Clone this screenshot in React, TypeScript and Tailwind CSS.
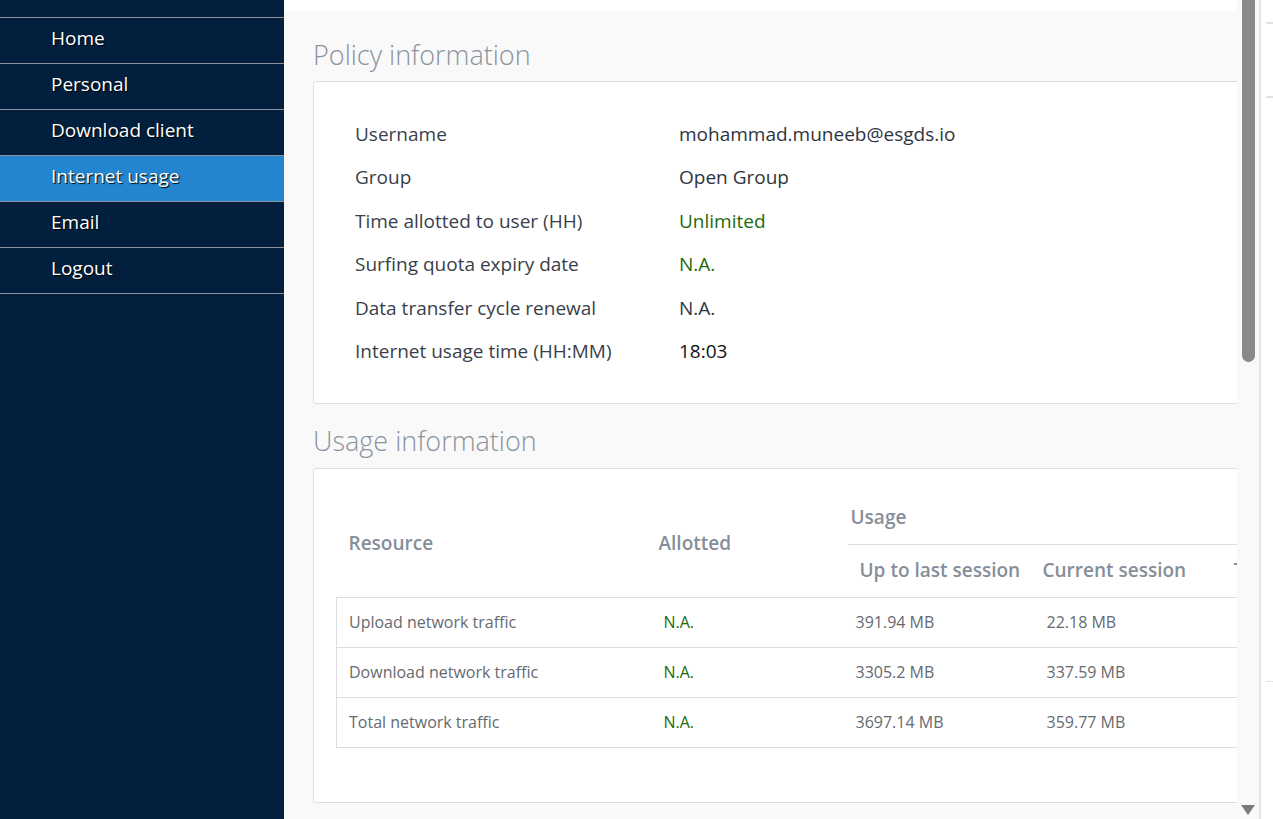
import React from "react"

const navItems = [
  { label: "Home" },
  { label: "Personal" },
  { label: "Download client" },
  { label: "Internet usage", active: true },
  { label: "Email" },
  { label: "Logout" },
]

const policyRows = [
  { label: "Username", value: "mohammad.muneeb@esgds.io", tone: "text-[#2f3440]" },
  { label: "Group", value: "Open Group", tone: "text-[#2f3440]" },
  { label: "Time allotted to user (HH)", value: "Unlimited", tone: "text-[#1d6a0a]" },
  { label: "Surfing quota expiry date", value: "N.A.", tone: "text-[#1d6a0a]" },
  { label: "Data transfer cycle renewal", value: "N.A.", tone: "text-[#2f3440]" },
  { label: "Internet usage time (HH:MM)", value: "18:03", tone: "text-[#111]" },
]

const usageRows = [
  { resource: "Upload network traffic", last: "391.94 MB", current: "22.18 MB", total: "414.12 MB" },
  { resource: "Download network traffic", last: "3305.2 MB", current: "337.59 MB", total: "3642.79 MB" },
  { resource: "Total network traffic", last: "3697.14 MB", current: "359.77 MB", total: "4056.91 MB" },
]

export default function App() {
  return (
    <div className="flex h-[819px] w-[1273px] overflow-hidden bg-[#f9f9f9] font-['Open_Sans',sans-serif]">
      {/* Sidebar */}
      <aside className="w-[284px] shrink-0 bg-[#02203e] pt-[17px]">
        <nav className="border-t border-[#8c939c]">
          {navItems.map((item) => (
            <div
              key={item.label}
              className={`flex h-[46px] items-center border-b border-[#8c939c] pb-[4px] pl-[51px] text-[19px] text-white [text-shadow:1px_1px_1px_#000] ${
                item.active ? "bg-[#2385d0]" : ""
              }`}
            >
              {item.label}
            </div>
          ))}
        </nav>
      </aside>

      {/* Main content */}
      <main className="flex w-[953px] shrink-0 flex-col overflow-hidden">
        <div className="h-[11px] shrink-0 bg-white" />
        <div className="pl-[29px] pt-[25px]">
          <h2 className="flex h-[38px] items-center text-[27px] font-light text-[#8a939e]">Policy information</h2>
          <div className="mt-[7px] w-[1000px] rounded-[3px] border border-[#dddddd] bg-white py-[30px] pl-[41px]">
            {policyRows.map((row) => (
              <div key={row.label} className="flex h-[43.5px] items-center text-[19px]">
                <span className="w-[324px] text-[#3a3f4b]">{row.label}</span>
                <span className={row.tone}>{row.value}</span>
              </div>
            ))}
          </div>

          <h2 className="mt-[18px] flex h-[38px] items-center text-[27px] font-light text-[#8a939e]">Usage information</h2>
          <div className="mt-[8px] w-[1000px] rounded-[3px] border border-[#dddddd] bg-white pb-[54px] pl-[22px] pt-[21px]">
            <table className="w-[985px] table-fixed border-collapse">
              <colgroup>
                <col className="w-[310px]" />
                <col className="w-[201px]" />
                <col className="w-[183px]" />
                <col className="w-[191px]" />
                <col className="w-[100px]" />
              </colgroup>
              <thead className="text-[19px] font-semibold text-[#858e99]">
                <tr className="h-[54px]">
                  <th rowSpan={2} className="pl-[12px] text-left align-middle font-semibold">Resource</th>
                  <th rowSpan={2} className="pl-[12px] text-left align-middle font-semibold">Allotted</th>
                  <th colSpan={3} className="border-b border-[#dddddd] pl-[3px] text-left font-semibold">Usage</th>
                </tr>
                <tr className="h-[53px]">
                  <th className="pl-[12px] text-left font-semibold whitespace-nowrap">Up to last session</th>
                  <th className="pl-[12px] text-left font-semibold whitespace-nowrap">Current session</th>
                  <th className="pl-[12px] text-left font-semibold whitespace-nowrap">Total</th>
                </tr>
              </thead>
              <tbody className="border-l border-t border-[#dddddd] text-[16px] text-[#666a70]">
                {usageRows.map((row) => (
                  <tr key={row.resource} className="h-[50px] border-b border-[#dddddd]">
                    <td className="pl-[12px]">{row.resource}</td>
                    <td className="pl-[17px] text-[#1d6a0a]">N.A.</td>
                    <td className="pl-[8px]">{row.last}</td>
                    <td className="pl-[16px]">{row.current}</td>
                    <td className="pl-[40px] whitespace-nowrap">{row.total}</td>
                  </tr>
                ))}
              </tbody>
            </table>
          </div>
        </div>
      </main>

      {/* Scrollbar */}
      <div className="relative w-[22px] shrink-0 bg-[#f9f9f9]">
        <div className="ml-[5px] h-[362px] w-[13px] rounded-b-[7px] bg-[#898989]" />
        <svg className="absolute bottom-[4px] left-[4px]" width="14" height="10" viewBox="0 0 14 10">
          <path d="M0 0 H14 L7 10 Z" fill="#7a7a7a" />
        </svg>
      </div>

      {/* Neighbouring pane edge */}
      <div className="w-[2px] shrink-0 bg-[#e6e6e6]" />
      <div className="flex flex-1 flex-col bg-white pl-[5px]">
        <div className="mt-[22px] h-[2px] bg-[#e0e0e0]" />
        <div className="mt-[72px] h-[2px] bg-[#e0e0e0]" />
        <div className="mt-[583px] h-[1px] bg-[#e0e0e0]" />
      </div>
    </div>
  )
}
